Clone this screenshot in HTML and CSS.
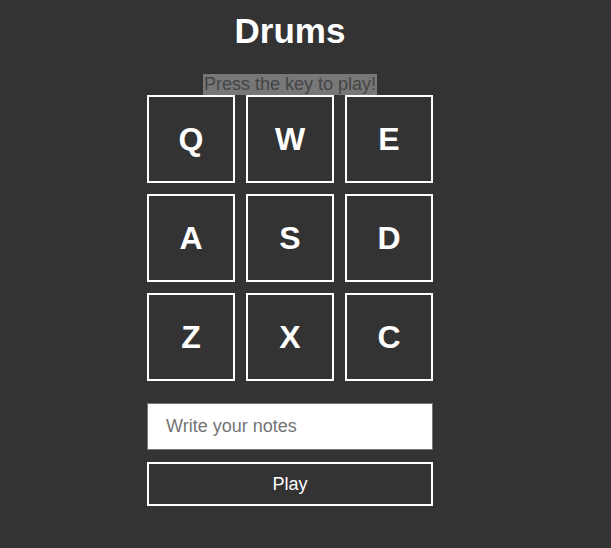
FILE: index.html
```html
<!DOCTYPE html>
<html>
<head>
<meta charset="utf-8">
<link rel="stylesheet" href="styles.css">
</head>
<body>
<div class="app">
  <h1 class="title">Drums</h1>
  <div class="hint-row"><span class="hint">Press the key to play!</span></div>
  <div class="pads">
    <div class="pad">Q</div>
    <div class="pad">W</div>
    <div class="pad">E</div>
    <div class="pad">A</div>
    <div class="pad">S</div>
    <div class="pad">D</div>
    <div class="pad">Z</div>
    <div class="pad">X</div>
    <div class="pad">C</div>
  </div>
  <input class="notes" type="text" placeholder="Write your notes">
  <button class="play">Play</button>
</div>
</body>
</html>
```
FILE: styles.css
```css
html, body {
  margin: 0;
  padding: 0;
  background: #333333;
  font-family: "Liberation Sans", Arial, sans-serif;
}
.app {
  width: 286px;
  margin: 0 0 0 147px;
  display: flex;
  flex-direction: column;
}
.title {
  margin: 11px 0 0 0;
  font-size: 35px;
  font-weight: bold;
  color: #ffffff;
  text-align: center;
  line-height: 40px;
}
.hint-row {
  margin-top: 23px;
  text-align: center;
  line-height: 21px;
  height: 21px;
}
.hint {
  display: inline-block;
  background: #777777;
  color: #444444;
  font-size: 18px;
  padding: 0 1px;
}
.pads {
  display: grid;
  grid-template-columns: repeat(3, 88px);
  grid-auto-rows: 88px;
  gap: 11px;
}
.pad {
  box-sizing: border-box;
  border: 2px solid #ffffff;
  color: #ffffff;
  font-size: 32px;
  font-weight: bold;
  display: flex;
  align-items: center;
  justify-content: center;
}
.notes {
  box-sizing: border-box;
  margin: 22px 0 0 0;
  width: 286px;
  height: 47px;
  border: 1px solid #767676;
  background: #ffffff;
  padding: 0 18px;
  font-family: "Liberation Sans", Arial, sans-serif;
  font-size: 18px;
  color: #333;
  outline: none;
}
.notes::placeholder {
  color: #757575;
}
.play {
  box-sizing: border-box;
  margin: 12px 0 0 0;
  width: 286px;
  height: 44px;
  background: transparent;
  border: 2px solid #ffffff;
  color: #ffffff;
  font-family: "Liberation Sans", Arial, sans-serif;
  font-size: 18px;
  padding: 0;
}
```
